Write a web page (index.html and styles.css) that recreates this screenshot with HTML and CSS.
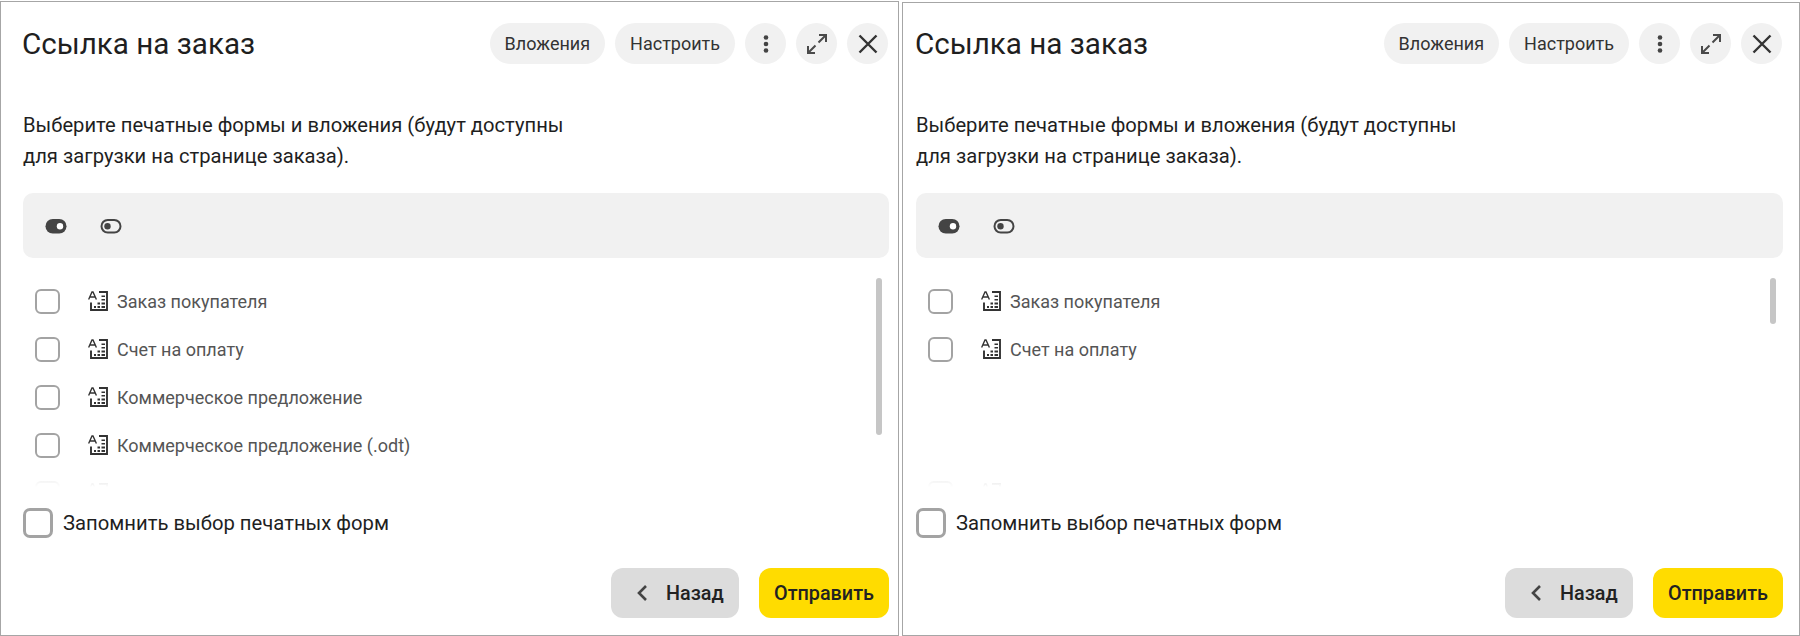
FILE: index.html
```html
<!DOCTYPE html>
<html lang="ru">
<head>
  <meta charset="UTF-8">
  <title>Ссылка на заказ</title>
  <link rel="stylesheet" href="styles.css">
</head>
<body>
  <svg class="sprite" width="0" height="0" aria-hidden="true">
    <symbol id="doc" viewBox="0 0 20 20">
      <path d="M.6 8.500 4 1h1l3.400 7.500M2 6h5" fill="none" stroke="currentColor" stroke-width="1.400"/>
      <path d="M11 1h8v18H3v-7.500" fill="none" stroke="currentColor" stroke-width="1.900"/>
      <path d="M13.500 4.500h3.500v1.500h-3.500zM13.500 8h3.500v1.500h-3.500zM13.500 11.500h3.500v2h-3.500zM13.500 15h3.500v2h-3.500zM9.500 11.500h2.500v2H9.500zM9.500 15h2.500v2H9.500zM6 15h2v2H6z" fill="currentColor"/>
    </symbol>
  </svg>

  <div class="panel panel-first">
    <div class="header">
      <h1>Ссылка на заказ</h1>
      <div class="header-actions">
        <button class="pill">Вложения</button>
        <button class="pill">Настроить</button>
        <button class="round"><svg width="24" height="24" viewBox="0 0 24 24"><circle cx="12" cy="5.500" r="2.300"/><circle cx="12" cy="12" r="2.300"/><circle cx="12" cy="18.500" r="2.300"/></svg></button>
        <button class="round"><svg width="24" height="24" viewBox="0 0 24 24" class="stroke"><path d="M14 3h7v7M21 3l-7.500 7.500M3 14v7h7M3 21l7.500-7.500"/></svg></button>
        <button class="round"><svg width="24" height="24" viewBox="0 0 24 24" class="stroke stroke-x"><path d="M3.500 3.500l17 17M20.500 3.500l-17 17"/></svg></button>
      </div>
    </div>
    <p class="hint">Выберите печатные формы и вложения (будут доступны<br>для загрузки на странице заказа).</p>
    <div class="toolbar">
      <svg width="24" height="24" viewBox="0 0 24 24"><rect x="1.500" y="5" width="21" height="14.500" rx="7.250" fill="#444"/><circle cx="16" cy="12.250" r="3.200" fill="#fff"/></svg>
      <svg width="24" height="24" viewBox="0 0 24 24"><rect x="2.500" y="6" width="19" height="12.500" rx="6.250" fill="none" stroke="#444" stroke-width="2"/><circle cx="8.500" cy="12.250" r="3.200" fill="#444"/></svg>
    </div>
    <div class="list-wrap">
      <ul class="list">
        <li><span class="check"></span><svg class="doc" width="20" height="20"><use href="#doc"/></svg>Заказ покупателя</li>
        <li><span class="check"></span><svg class="doc" width="20" height="20"><use href="#doc"/></svg>Счет на оплату</li>
        <li><span class="check"></span><svg class="doc" width="20" height="20"><use href="#doc"/></svg>Коммерческое предложение</li>
        <li><span class="check"></span><svg class="doc" width="20" height="20"><use href="#doc"/></svg>Коммерческое предложение (.odt)</li>
        <li><span class="check"></span><svg class="doc" width="20" height="20"><use href="#doc"/></svg></li>
      </ul>
      <div class="scrollbar"></div>
    </div>
    <label class="remember"><span class="check check-big"></span>Запомнить выбор печатных форм</label>
    <div class="footer">
      <button class="btn btn-back"><svg width="24" height="24" viewBox="0 0 24 24" class="stroke stroke-back"><path d="M16 5l-7 7 7 7"/></svg>Назад</button>
      <button class="btn btn-send">Отправить</button>
    </div>
  </div>

  <div class="panel panel-second">
    <div class="header">
      <h1>Ссылка на заказ</h1>
      <div class="header-actions">
        <button class="pill">Вложения</button>
        <button class="pill">Настроить</button>
        <button class="round"><svg width="24" height="24" viewBox="0 0 24 24"><circle cx="12" cy="5.500" r="2.300"/><circle cx="12" cy="12" r="2.300"/><circle cx="12" cy="18.500" r="2.300"/></svg></button>
        <button class="round"><svg width="24" height="24" viewBox="0 0 24 24" class="stroke"><path d="M14 3h7v7M21 3l-7.500 7.500M3 14v7h7M3 21l7.500-7.500"/></svg></button>
        <button class="round"><svg width="24" height="24" viewBox="0 0 24 24" class="stroke stroke-x"><path d="M3.500 3.500l17 17M20.500 3.500l-17 17"/></svg></button>
      </div>
    </div>
    <p class="hint">Выберите печатные формы и вложения (будут доступны<br>для загрузки на странице заказа).</p>
    <div class="toolbar">
      <svg width="24" height="24" viewBox="0 0 24 24"><rect x="1.500" y="5" width="21" height="14.500" rx="7.250" fill="#444"/><circle cx="16" cy="12.250" r="3.200" fill="#fff"/></svg>
      <svg width="24" height="24" viewBox="0 0 24 24"><rect x="2.500" y="6" width="19" height="12.500" rx="6.250" fill="none" stroke="#444" stroke-width="2"/><circle cx="8.500" cy="12.250" r="3.200" fill="#444"/></svg>
    </div>
    <div class="list-wrap">
      <ul class="list">
        <li><span class="check"></span><svg class="doc" width="20" height="20"><use href="#doc"/></svg>Заказ покупателя</li>
        <li><span class="check"></span><svg class="doc" width="20" height="20"><use href="#doc"/></svg>Счет на оплату</li>
        <li class="empty"></li>
        <li class="empty"></li>
        <li><span class="check"></span><svg class="doc" width="20" height="20"><use href="#doc"/></svg></li>
      </ul>
      <div class="scrollbar scrollbar-short"></div>
    </div>
    <label class="remember"><span class="check check-big"></span>Запомнить выбор печатных форм</label>
    <div class="footer">
      <button class="btn btn-back"><svg width="24" height="24" viewBox="0 0 24 24" class="stroke stroke-back"><path d="M16 5l-7 7 7 7"/></svg>Назад</button>
      <button class="btn btn-send">Отправить</button>
    </div>
  </div>
</body>
</html>
```

FILE: styles.css
```css
/* Общие стили */
html, body {
  height: 100%;
}

body {
  margin: 0;
  display: flex;
  gap: 3px;
  background: #fff;
  font-family: Roboto, "Noto Sans", sans-serif;
  color: #1f1f1f;
  overflow: hidden;
}

.sprite {
  display: none;
}

button {
  font-family: inherit;
  border: none;
  cursor: pointer;
}

/* Панель */
.panel {
  box-sizing: border-box;
  border: 1px solid #a6a6a6;
  display: flex;
  flex-direction: column;
  flex: none;
}

.panel-first {
  width: 899px;
  height: 635px;
  margin-top: 1px;
  padding: 21px 9px 0 22px;
}

.panel-second {
  width: 898px;
  height: 634px;
  margin-top: 2px;
  padding: 20px 16px 0 13px;
}

/* Шапка */
.header {
  display: flex;
  justify-content: space-between;
  align-items: center;
  height: 41px;
}

h1 {
  margin: 0 0 0 -1px;
  font-size: 29.6px;
  font-weight: 400;
}

.header-actions {
  display: flex;
  gap: 10px;
  margin-right: 1px;
}

.pill {
  height: 41px;
  padding: 0 15px;
  border-radius: 21px;
  background: #f1f1f1;
  font-size: 18px;
  color: #333;
}

.round {
  width: 41px;
  height: 41px;
  padding: 0;
  border-radius: 50%;
  background: #f1f1f1;
  display: flex;
  align-items: center;
  justify-content: center;
  fill: #444;
}

.stroke {
  fill: none;
  stroke: #4a4a4a;
  stroke-width: 2;
}

.stroke-x {
  stroke: #333;
  stroke-width: 2.400;
}

.stroke-back {
  stroke: #444;
  stroke-width: 2.600;
}

/* Подсказка */
.hint {
  margin: 46px 0 0;
  font-size: 20.2px;
  line-height: 31px;
}

/* Панель переключателей */
.toolbar {
  margin-top: 21px;
  height: 65px;
  padding: 0 21px;
  border-radius: 10px;
  background: #f1f1f1;
  display: flex;
  align-items: center;
  gap: 31px;
}

/* Список */
.list-wrap {
  position: relative;
  margin-top: 19px;
  height: 210px;
  overflow: hidden;
}

.list-wrap::after {
  content: "";
  position: absolute;
  left: 0;
  right: 0;
  bottom: 0;
  height: 8px;
  background: linear-gradient(rgba(255, 255, 255, 0.85), #fff);
}

.list {
  margin: 0;
  padding: 0;
  list-style: none;
}

.list li {
  height: 48px;
  display: flex;
  align-items: center;
  padding-left: 12px;
  font-size: 18px;
  color: #555;
}

.check {
  box-sizing: border-box;
  width: 25px;
  height: 25px;
  border: 2px solid #a3a3a3;
  border-radius: 6px;
  flex: none;
}

.doc {
  margin: 0 9px 0 28px;
  color: #333;
}

.scrollbar {
  position: absolute;
  right: 7px;
  top: 1px;
  width: 6px;
  height: 157px;
  border-radius: 3px;
  background: #c6c6c6;
}

.scrollbar-short {
  height: 46px;
}

/* Запомнить выбор */
.remember {
  display: flex;
  align-items: center;
  gap: 10px;
  margin-top: 21px;
  font-size: 20.25px;
}

.check-big {
  width: 30px;
  height: 30px;
  border-width: 3px;
  border-radius: 7px;
}

/* Кнопки внизу */
.footer {
  margin-top: 30px;
  display: flex;
  justify-content: flex-end;
  gap: 20px;
}

.btn {
  height: 50px;
  border-radius: 12px;
  font-size: 19.8px;
  font-weight: 500;
  color: #222;
  display: flex;
  align-items: center;
}

.btn-back {
  width: 128px;
  padding-left: 19px;
  gap: 12px;
  background: #dcdcdc;
}

.btn-send {
  width: 130px;
  justify-content: center;
  background: #ffdc00;
}
```
